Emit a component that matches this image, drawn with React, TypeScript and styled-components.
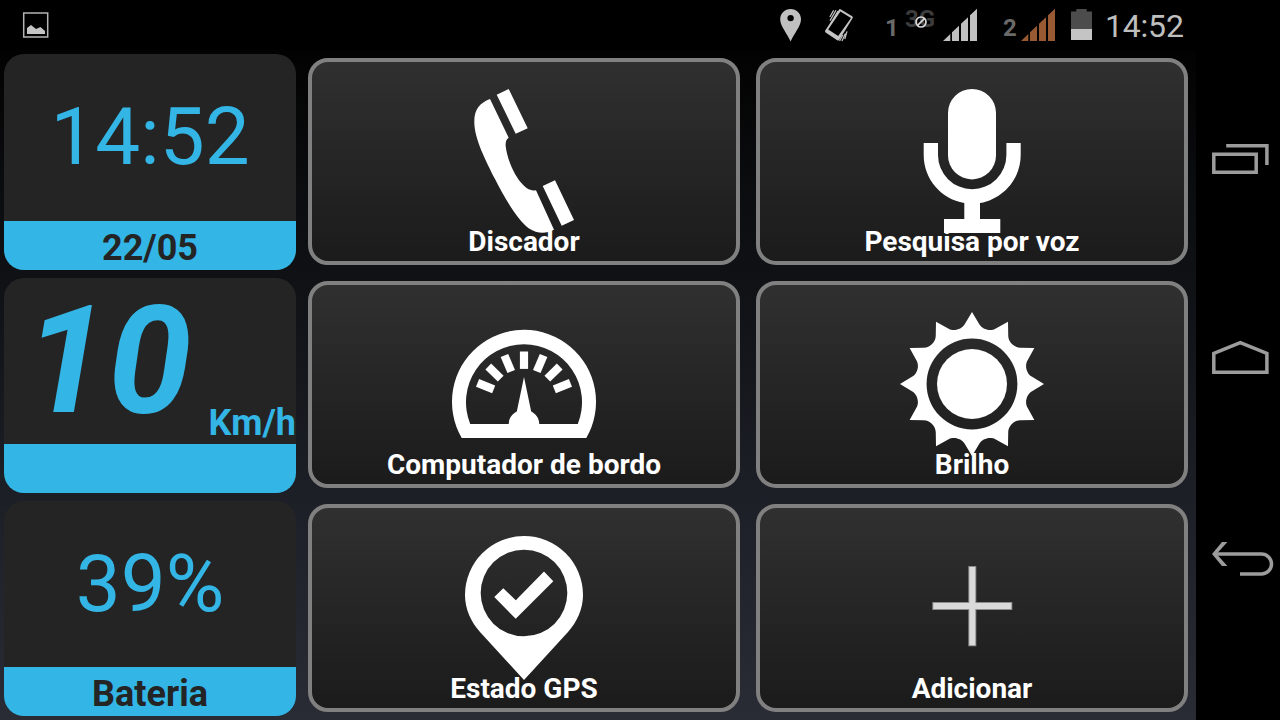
import React from "react";
import styled, { createGlobalStyle } from "styled-components";

const ACCENT = "#33b5e5";

const GlobalStyle = createGlobalStyle`
  *, *::before, *::after { box-sizing: border-box; }
  html, body { margin: 0; padding: 0; background: #000; }
  body { font-family: Roboto, "Liberation Sans", sans-serif; overflow: hidden; }
  svg { display: block; flex: none; }
`;

const Screen = styled.div`
  display: grid;
  grid-template-columns: 1196px 84px;
  width: 1280px;
  height: 720px;
  background: #000;
`;

const Main = styled.div`
  display: flex;
  flex-direction: column;
  height: 720px;
`;

const StatusBar = styled.header`
  display: flex;
  align-items: stretch;
  justify-content: space-between;
  height: 50px;
  padding: 0 11px 0 22px;
  background: #000;
`;

const StatusGroup = styled.div`
  display: flex;
  align-items: stretch;
`;

const StatusItem = styled.div<{ $gap?: number; $width: number }>`
  position: relative;
  width: ${(p) => p.$width}px;
  margin-left: ${(p) => p.$gap ?? 0}px;
`;

const SimText = styled.span<{ $top: number; $tone: string }>`
  display: block;
  padding-top: ${(p) => p.$top}px;
  color: ${(p) => p.$tone};
  font-size: 24px;
  line-height: 28px;
  font-weight: 700;
  white-space: nowrap;
`;

const NoData = styled.svg`
  position: absolute;
  left: 9px;
  top: 15px;
`;

const StatusClock = styled.span`
  display: block;
  padding: 7px 0 0 1px;
  color: #bebebe;
  font-size: 32px;
  line-height: 38px;
  letter-spacing: -0.2px;
  white-space: nowrap;
`;

const Desktop = styled.main`
  display: grid;
  grid-template-columns: 300px 896px;
  flex: 1;
  min-height: 0;
  background: linear-gradient(180deg, #020202 0%, #0b0c0e 20%, #121419 42%, #1c1f26 66%, #292c35 100%);
`;

const WidgetColumn = styled.aside`
  display: grid;
  grid-template-rows: 224px 223px 223px;
`;

const CardGrid = styled.div`
  display: grid;
  grid-template-columns: 1fr 1fr;
  grid-template-rows: 223px 223px 224px;
`;

const Widget = styled.section`
  display: flex;
  flex-direction: column;
  margin: 4px;
  border-radius: 20px;
  background: #242424;
`;

const WidgetBody = styled.div`
  display: flex;
  justify-content: center;
  flex: 1;
  min-height: 0;
  color: ${ACCENT};
`;

const WidgetValue = styled.div`
  padding-top: 36px;
  font-size: 80px;
  line-height: 94px;
`;

const SpeedBody = styled(WidgetBody)`
  justify-content: flex-end;
  align-items: flex-start;
`;

const Speed = styled.div`
  margin-right: 17px;
  padding-top: 1px;
  font-size: 150px;
  line-height: 164px;
  font-weight: 700;
  font-style: italic;
`;

const SpeedUnit = styled.div`
  padding-top: 124px;
  font-size: 36px;
  line-height: 42px;
  font-weight: 700;
`;

const WidgetFooter = styled.div`
  height: 49px;
  padding-top: 6px;
  border-radius: 0 0 20px 20px;
  background: ${ACCENT};
  color: #242424;
  font-size: 36px;
  line-height: 42px;
  font-weight: 700;
  text-align: center;
`;

const Card = styled.button`
  display: flex;
  flex-direction: column;
  align-items: center;
  justify-content: flex-end;
  margin: 8px;
  padding: 0 0 3px;
  border: 4px solid #808080;
  border-radius: 20px;
  background: linear-gradient(180deg, #303030 0%, #1b1b1b 100%);
  font-family: inherit;
  min-height: 0;
`;

const CardLabel = styled.span`
  margin-top: -9px;
  color: #fff;
  font-size: 28px;
  line-height: 33px;
  font-weight: 700;
  white-space: nowrap;
`;

const NavBar = styled.nav`
  display: flex;
  flex-direction: column;
  gap: 159px;
  padding: 139px 0 0 14px;
  background: #000;
`;

const NavIcon = styled.svg`
  fill: none;
  stroke: #9c9c9c;
  stroke-width: 3.5;
`;

const SignalIcon = ({ color }: { color: string }) => (
  <svg width="34" height="50" viewBox="0 0 34 50" fill={color}>
    <path d="M0 41L7.3 34V41ZM9 32.3L16 25.7V41H9ZM18 23.8L25 17.2V41H18ZM27 15.3L34 8.8V41H27Z" />
  </svg>
);

const PictureIcon = () => (
  <svg width="28" height="50" viewBox="0 0 28 50">
    <rect x="1.7" y="13" width="24" height="24" fill="none" stroke="#b4b4b4" strokeWidth="1.5" />
    <path d="M5 34V28L9 25L14 29L18.5 27L23 31V34Z" fill="#c4c4c4" />
  </svg>
);

const PlaceIcon = () => (
  <svg width="22" height="50" viewBox="0 0 22 50">
    <path
      fillRule="evenodd"
      fill="#c0c0c0"
      d="M10.6 9C4.7 9 0.2 13.5 0.2 19.4C0.2 26 7 33 10.6 41.6C14.2 33 21 26 21 19.4C21 13.5 16.5 9 10.6 9ZM10.6 14.9A3.2 3.2 0 1 1 10.6 21.3A3.2 3.2 0 1 1 10.6 14.9Z"
    />
  </svg>
);

const VibrateIcon = () => (
  <svg width="30" height="50" viewBox="0 0 30 50">
    <path
      fillRule="evenodd"
      fill="#c4c4c4"
      d="M15.3 9.2Q16 8.8 17 9.4L28.2 16.2Q29.2 17 28.7 18L15.5 39.5Q14.6 41 13.2 40.3L1.6 32.6Q0.6 31.8 1.2 30.6ZM16.4 11.4L4.2 29.6L14.2 36L27 17.9Z"
    />
    <path
      d="M5.8 17L9.6 10.4M6 20.6L12 10.2M6.4 24L14 11M15.6 41L18.8 35M18 41L21.4 33.4M20.8 39L23 31.4"
      stroke="#c4c4c4"
      strokeWidth="1.2"
      fill="none"
    />
  </svg>
);

const BatteryIcon = () => (
  <svg width="21" height="50" viewBox="0 0 21 50">
    <path d="M5.3 9H15.7V11.5H21V29H0V11.5H5.3Z" fill="#4c4c4c" />
    <path d="M0 29H21V40H0Z" fill="#c4c4c4" />
  </svg>
);

const AppIcon = ({ children }: { children: React.ReactNode }) => (
  <svg width="144" height="145" viewBox="0 0 144 145" fill="#fff">
    {children}
  </svg>
);

const PhoneIcon = () => (
  <AppIcon>
    <path d="M38 10L56.7 48.7C53.8 50.5 53.3 54 53.8 58C55.2 70 62 85 68.5 93C73.5 99 78.5 102.5 84 101.2L102 140.8C93 145.5 85 144.5 77 139.5C66 132 52 108 43 90C34 72 22.3 50 22.3 32.7C22.3 20 28 14 38 10Z" />
    <path d="M44.7 5.7L56.7 0L75.7 39.3L63.7 44.7ZM90.7 97L103 91.3L122 131L109.7 136.7Z" />
  </AppIcon>
);

const MicIcon = () => (
  <AppIcon>
    <rect x="48" y="0" width="48" height="90.4" rx="24" />
    <path d="M23.7 54H38V66A34.2 34.2 0 0 0 106.4 66V54H120.7V66C120.7 90 103 110 80 114V130H100.3V144H44V130H64.3V114C41 110 23.7 90 23.7 66Z" />
  </AppIcon>
);

const GaugeIcon = () => (
  <AppIcon>
    <path
      fillRule="evenodd"
      d="M9.7 125.9A72 72 0 1 1 134.3 125.9ZM18.2 111.9H56.7C57 106 60 102 64.8 99.5L72 65L79.2 99.5C84 102 87 106 87.3 111.9H125.8A58 58 0 1 0 18.2 111.9Z"
    />
    {[-68, -45.5, -23, 0, 23, 45.5, 68].map((angle) => (
      <rect key={angle} x="67.9" y="39.5" width="8.2" height="17.4" transform={`rotate(${angle} 72 89.6)`} />
    ))}
  </AppIcon>
);

const polar = (radius: number, degrees: number) => {
  const a = (degrees * Math.PI) / 180;
  return `${(72 + radius * Math.sin(a)).toFixed(2)} ${(72 - radius * Math.cos(a)).toFixed(2)}`;
};

const sunRays =
  Array.from({ length: 12 }, (_, i) => {
    const a = i * 30;
    return `${i ? "L" : "M"}${polar(72, a)}L${polar(60.5, a + 6.8)}C${polar(55.5, a + 10.5)} ${polar(55.5, a + 19.5)} ${polar(60.5, a + 23.2)}`;
  }).join("") + "Z";

const SunIcon = () => (
  <AppIcon>
    <path
      fillRule="evenodd"
      d={`${sunRays}M72 26.6A45.4 45.4 0 1 0 72 117.4A45.4 45.4 0 1 0 72 26.6Z`}
    />
    <circle cx="72" cy="72" r="35" />
  </AppIcon>
);

const GpsIcon = () => (
  <AppIcon>
    <path
      fillRule="evenodd"
      d="M72 0A59 59 0 0 0 13 59C13 73 19 86 28 96L72 144L116 96C125 86 131 73 131 59A59 59 0 0 0 72 0ZM72 13.7A43.3 43.3 0 1 1 72 100.3A43.3 43.3 0 1 1 72 13.7Z"
    />
    <path d="M42.3 61L51.3 52.2L63.8 64.3L92 35.6L101.3 45.3L63.7 82.8Z" />
  </AppIcon>
);

const PlusIcon = () => (
  <AppIcon>
    <path d="M68.3 30H76.3V66H112.3V74H76.3V110.3H68.3V74H32.3V66H68.3Z" fill="#8c8c8c" />
    <path d="M69.3 31H75.3V67H111.3V73H75.3V109.3H69.3V73H33.3V67H69.3Z" fill="#dadada" />
  </AppIcon>
);

const AppCard = ({ icon, label }: { icon: React.ReactNode; label: string }) => (
  <Card type="button">
    {icon}
    <CardLabel>{label}</CardLabel>
  </Card>
);

export default function App() {
  return (
    <>
      <GlobalStyle />
      <Screen>
        <Main>
          <StatusBar>
            <PictureIcon />
            <StatusGroup>
              <StatusItem $width={22}>
                <PlaceIcon />
              </StatusItem>
              <StatusItem $width={30} $gap={22}>
                <VibrateIcon />
              </StatusItem>
              <StatusItem $width={14} $gap={31}>
                <SimText $top={14} $tone="#6a6a6a">1</SimText>
              </StatusItem>
              <StatusItem $width={33} $gap={6}>
                <SimText $top={5} $tone="#3c3c3c">3G</SimText>
                <NoData width="14" height="14" viewBox="0 0 14 14" fill="none" stroke="#d8d8d8" strokeWidth="1.7">
                  <circle cx="7" cy="7" r="5" />
                  <path d="M3.6 10.4L10.4 3.6" />
                </NoData>
              </StatusItem>
              <StatusItem $width={34} $gap={5}>
                <SignalIcon color="#c0c0c0" />
              </StatusItem>
              <StatusItem $width={14} $gap={26}>
                <SimText $top={14} $tone="#6a6a6a">2</SimText>
              </StatusItem>
              <StatusItem $width={34} $gap={4}>
                <SignalIcon color="#985a33" />
              </StatusItem>
              <StatusItem $width={21} $gap={16}>
                <BatteryIcon />
              </StatusItem>
              <StatusItem $width={81} $gap={12}>
                <StatusClock>14:52</StatusClock>
              </StatusItem>
            </StatusGroup>
          </StatusBar>

          <Desktop>
            <WidgetColumn>
              <Widget>
                <WidgetBody>
                  <WidgetValue>14:52</WidgetValue>
                </WidgetBody>
                <WidgetFooter>22/05</WidgetFooter>
              </Widget>
              <Widget>
                <SpeedBody>
                  <Speed>10</Speed>
                  <SpeedUnit>Km/h</SpeedUnit>
                </SpeedBody>
                <WidgetFooter />
              </Widget>
              <Widget>
                <WidgetBody>
                  <WidgetValue>39%</WidgetValue>
                </WidgetBody>
                <WidgetFooter>Bateria</WidgetFooter>
              </Widget>
            </WidgetColumn>

            <CardGrid>
              <AppCard icon={<PhoneIcon />} label="Discador" />
              <AppCard icon={<MicIcon />} label="Pesquisa por voz" />
              <AppCard icon={<GaugeIcon />} label="Computador de bordo" />
              <AppCard icon={<SunIcon />} label="Brilho" />
              <AppCard icon={<GpsIcon />} label="Estado GPS" />
              <AppCard icon={<PlusIcon />} label="Adicionar" />
            </CardGrid>
          </Desktop>
        </Main>

        <NavBar>
          <NavIcon width="66" height="40" viewBox="0 0 66 40">
            <path d="M3.8 15.3H46.2V33.2H3.8ZM16.2 6.8H56.9V26" />
          </NavIcon>
          <NavIcon width="66" height="40" viewBox="0 0 66 40">
            <path d="M3.8 34.2V15.4L30.3 4.7L56.9 15.4V34.2Z" />
          </NavIcon>
          <NavIcon width="66" height="40" viewBox="0 0 66 40">
            <path d="M4.5 17H51.5A10 10 0 0 1 51.5 37H30" />
            <path d="M12 5H17.4L6.6 17L17.4 29H12L2 17Z" fill="#9c9c9c" stroke="none" />
          </NavIcon>
        </NavBar>
      </Screen>
    </>
  );
}
